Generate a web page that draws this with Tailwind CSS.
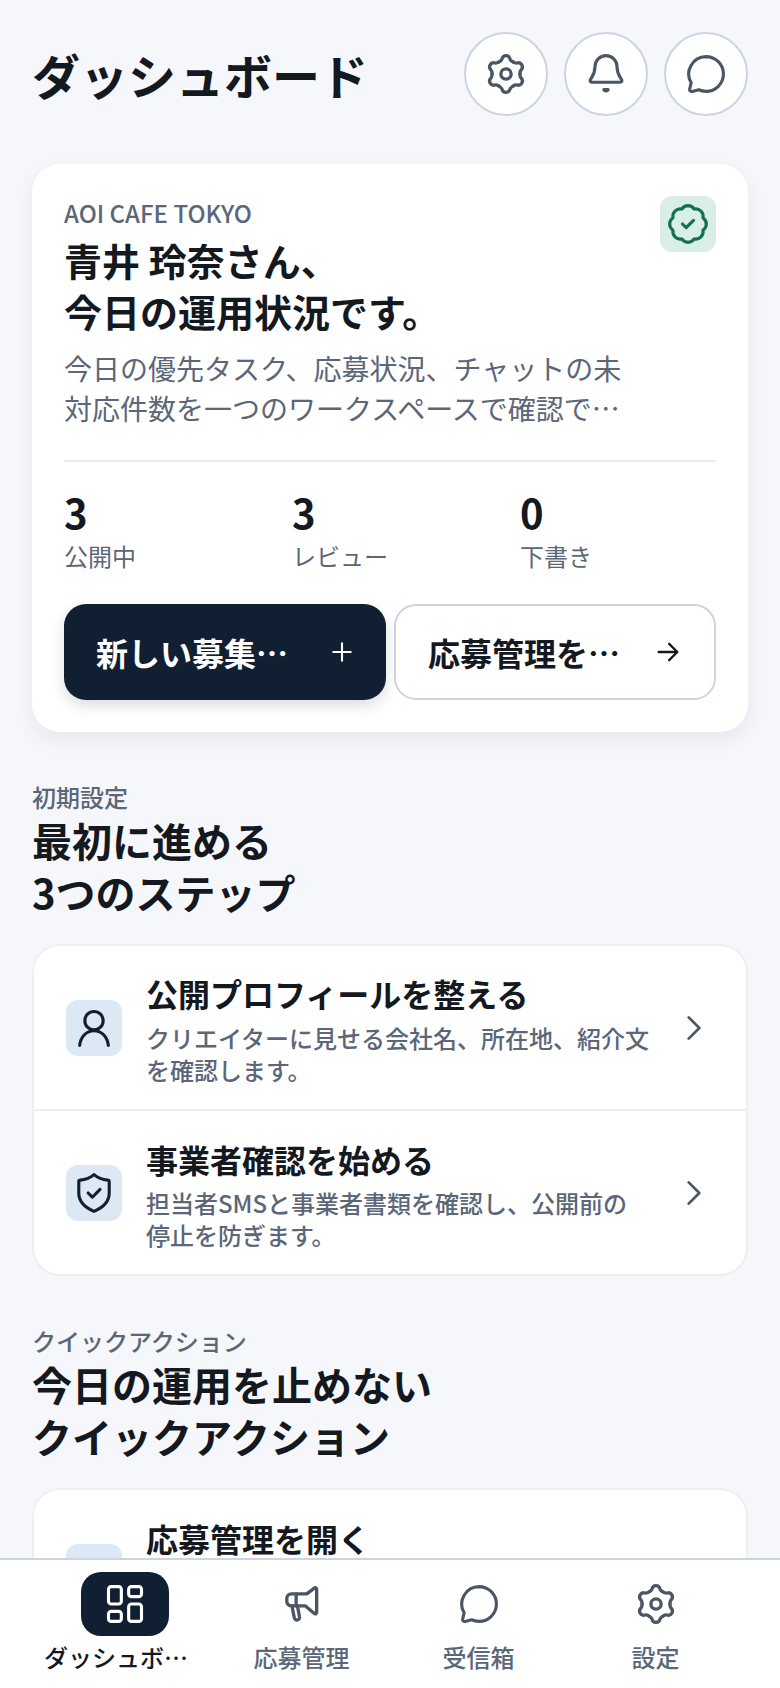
<!DOCTYPE html>
<html lang="ja">
<head>
  <meta charset="UTF-8" />
  <meta name="viewport" content="width=device-width, initial-scale=1" />
  <title>ダッシュボード</title>
  <script src="https://cdn.jsdelivr.net/npm/@tailwindcss/browser@4"></script>
</head>
<body class="relative h-[1688px] overflow-hidden bg-[#f5f7fb] font-['Noto_Sans_CJK_JP','Noto_Sans',sans-serif] text-[#14181f]">

  <main class="px-[32px] pt-[32px]">
    <!-- Header -->
    <header class="flex items-center justify-between h-[84px]">
      <h1 class="text-[48px] leading-[64px] font-bold">ダッシュボード</h1>
      <div class="flex gap-[16px]">
        <button class="w-[84px] h-[84px] rounded-full border-2 border-[#cbd5e1] bg-white flex items-center justify-center text-[#4b5563]">
          <svg class="w-[44px] h-[44px]" viewBox="0 0 24 24" fill="none" stroke="currentColor" stroke-width="1.8" stroke-linecap="round" stroke-linejoin="round">
            <path d="M8.2 5.42C9.1 4.9 9.6 4.5 9.8 3.8C10.1 2.6 11 2 12 2C13 2 13.9 2.6 14.2 3.8C14.4 4.5 14.9 4.9 15.8 5.42" />
            <path transform="rotate(60 12 12)" d="M8.2 5.42C9.1 4.9 9.6 4.5 9.8 3.8C10.1 2.6 11 2 12 2C13 2 13.9 2.6 14.2 3.8C14.4 4.5 14.9 4.9 15.8 5.42" />
            <path transform="rotate(120 12 12)" d="M8.2 5.42C9.1 4.9 9.6 4.5 9.8 3.8C10.1 2.6 11 2 12 2C13 2 13.9 2.6 14.2 3.8C14.4 4.5 14.9 4.9 15.8 5.42" />
            <path transform="rotate(180 12 12)" d="M8.2 5.42C9.1 4.9 9.6 4.5 9.8 3.8C10.1 2.6 11 2 12 2C13 2 13.9 2.6 14.2 3.8C14.4 4.5 14.9 4.9 15.8 5.42" />
            <path transform="rotate(240 12 12)" d="M8.2 5.42C9.1 4.9 9.6 4.5 9.8 3.8C10.1 2.6 11 2 12 2C13 2 13.9 2.6 14.2 3.8C14.4 4.5 14.9 4.9 15.8 5.42" />
            <path transform="rotate(300 12 12)" d="M8.2 5.42C9.1 4.9 9.6 4.5 9.8 3.8C10.1 2.6 11 2 12 2C13 2 13.9 2.6 14.2 3.8C14.4 4.5 14.9 4.9 15.8 5.42" />
            <circle cx="12" cy="12" r="2.800" />
          </svg>
        </button>
        <button class="w-[84px] h-[84px] rounded-full border-2 border-[#cbd5e1] bg-white flex items-center justify-center text-[#4b5563]">
          <svg class="w-[44px] h-[44px]" viewBox="0 0 24 24" fill="none" stroke="currentColor" stroke-width="1.7" stroke-linecap="round" stroke-linejoin="round">
            <path d="M12 2a6 6 0 0 0-6 6c0 4.200-2 6-2.600 7.200-.3.700.2 1.300 1 1.300h15.200c.8 0 1.300-.6 1-1.300C20 14 18 12.200 18 8a6 6 0 0 0-6-6z" />
            <path d="M10.800 20.500a1.300 1.300 0 0 0 2.400 0z" />
          </svg>
        </button>
        <button class="w-[84px] h-[84px] rounded-full border-2 border-[#cbd5e1] bg-white flex items-center justify-center text-[#4b5563]">
          <svg class="w-[44px] h-[44px]" viewBox="0 0 24 24" fill="none" stroke="currentColor" stroke-width="1.7" stroke-linecap="round" stroke-linejoin="round">
            <path d="M12 2.500a9.500 9.500 0 0 1 0 19c-1.700 0-3-.4-4-.9l-3.500.9c-1 .2-1.600-.4-1.400-1.300l.8-3.400A9.500 9.500 0 0 1 12 2.500z" />
          </svg>
        </button>
      </div>
    </header>

    <!-- Hero card -->
    <section class="mt-[48px] rounded-[28px] bg-white p-[32px] shadow-[0_8px_20px_rgba(15,23,42,0.07)]">
      <div class="flex justify-between gap-[16px]">
        <div class="min-w-0 flex-1">
          <p class="text-[24px] leading-[34px] font-medium text-[#5b6678]">AOI CAFE TOKYO</p>
          <h2 class="mt-[4px] text-[38px] leading-[51px] font-bold">青井 玲奈さん、<br />今日の運用状況です。</h2>
          <p class="mt-[12px] text-[28px] leading-[40px] text-[#5b6678] line-clamp-2">今日の優先タスク、応募状況、チャットの未対応件数を一つのワークスペースで確認できます。</p>
        </div>
        <div class="w-[56px] h-[56px] shrink-0 rounded-[12px] bg-[#d9efe5] flex items-center justify-center text-[#15704f]">
          <svg class="w-[44px] h-[44px]" viewBox="0 0 24 24" fill="none" stroke="currentColor" stroke-width="1.7" stroke-linecap="round" stroke-linejoin="round">
            <path d="M3.85 8.62a4 4 0 0 1 4.78-4.77 4 4 0 0 1 6.74 0 4 4 0 0 1 4.78 4.78 4 4 0 0 1 0 6.74 4 4 0 0 1-4.77 4.78 4 4 0 0 1-6.75 0 4 4 0 0 1-4.78-4.77 4 4 0 0 1 0-6.76Z" />
            <path d="m9 12 2 2 4-4" />
          </svg>
        </div>
      </div>

      <div class="mt-[32px] border-t-2 border-[#e8ebf0] pt-[22px] grid grid-cols-3 gap-[32px]">
        <div>
          <p class="text-[40px] leading-[56px] font-bold">3</p>
          <p class="text-[24px] leading-[32px] text-[#5b6678]">公開中</p>
        </div>
        <div>
          <p class="text-[40px] leading-[56px] font-bold">3</p>
          <p class="text-[24px] leading-[32px] text-[#5b6678]">レビュー</p>
        </div>
        <div>
          <p class="text-[40px] leading-[56px] font-bold">0</p>
          <p class="text-[24px] leading-[32px] text-[#5b6678]">下書き</p>
        </div>
      </div>

      <div class="mt-[32px] grid grid-cols-2 gap-[8px]">
        <button class="h-[96px] rounded-[22px] bg-[#111f33] text-white pl-[32px] pr-[30px] flex items-center gap-[36px] shadow-[0_6px_14px_rgba(15,23,42,0.14)]">
          <span class="min-w-0 flex-1 truncate text-left text-[32px] leading-[44px] font-bold">新しい募集を作成する</span>
          <svg class="w-[28px] h-[28px] shrink-0" viewBox="0 0 24 24" fill="none" stroke="currentColor" stroke-width="1.800" stroke-linecap="round">
            <path d="M12 4.500v15M4.500 12h15" />
          </svg>
        </button>
        <button class="h-[96px] rounded-[22px] border-2 border-[#cbd5e1] bg-white px-[32px] flex items-center gap-[32px]">
          <span class="min-w-0 flex-1 truncate text-left text-[32px] leading-[44px] font-bold">応募管理を開いて確認</span>
          <svg class="w-[28px] h-[28px] shrink-0" viewBox="0 0 24 24" fill="none" stroke="currentColor" stroke-width="2" stroke-linecap="round" stroke-linejoin="round">
            <path d="M4 12h16M13 5l7 7-7 7" />
          </svg>
        </button>
      </div>
    </section>

    <!-- Setup steps -->
    <section class="mt-[48px]">
      <p class="text-[24px] leading-[34px] font-medium text-[#5b6678]">初期設定</p>
      <h2 class="text-[40px] leading-[52px] font-bold">最初に進める<br />3つのステップ</h2>
      <div class="mt-[26px] rounded-[28px] border-2 border-[#eceff3] bg-white">
        <a class="flex items-center gap-[24px] pl-[32px] pr-[36px] pt-[23px] pb-[23px] border-b-2 border-[#eceff3]">
          <span class="w-[56px] h-[56px] shrink-0 rounded-[12px] bg-[#dce8f4] flex items-center justify-center text-[#111f33]">
            <svg class="w-[44px] h-[44px]" viewBox="0 0 24 24" fill="none" stroke="currentColor" stroke-width="1.7" stroke-linecap="round" stroke-linejoin="round">
              <circle cx="12" cy="8" r="5" />
              <path d="M4.200 21.500c.4-4.500 3.500-8 7.800-8s7.400 3.500 7.800 8" />
            </svg>
          </span>
          <span class="min-w-0 flex-1">
            <span class="block text-[32px] leading-[48px] font-bold">公開プロフィールを整える</span>
            <span class="block mt-[5px] text-[24px] leading-[32px] font-medium text-[#5b6678]">クリエイターに見せる会社名、所在地、紹介文を確認します。</span>
          </span>
          <svg class="ml-[3px] w-[32px] h-[32px] shrink-0 text-[#4b5563]" viewBox="0 0 24 24" fill="none" stroke="currentColor" stroke-width="2" stroke-linecap="round" stroke-linejoin="round">
            <path d="m8 4 8 8-8 8" />
          </svg>
        </a>
        <a class="flex items-center gap-[24px] pl-[32px] pr-[36px] pt-[24px] pb-[23px]">
          <span class="w-[56px] h-[56px] shrink-0 rounded-[12px] bg-[#dce8f4] flex items-center justify-center text-[#111f33]">
            <svg class="w-[44px] h-[44px]" viewBox="0 0 24 24" fill="none" stroke="currentColor" stroke-width="1.7" stroke-linecap="round" stroke-linejoin="round">
              <path d="M12 2c2 1.700 4.500 2.700 7.500 3 .5 0 .8.400.8.900v6.100c0 4.500-3.500 8-8.300 10-4.800-2-8.300-5.500-8.300-10V5.900c0-.5.300-.9.800-.9 3-.3 5.500-1.300 7.500-3z" />
              <path d="m8.800 12 2.300 2.300 4.200-4.300" />
            </svg>
          </span>
          <span class="min-w-0 flex-1">
            <span class="block text-[32px] leading-[48px] font-bold">事業者確認を始める</span>
            <span class="block mt-[4px] text-[24px] leading-[32px] font-medium text-[#5b6678]">担当者SMSと事業者書類を確認し、公開前の停止を防ぎます。</span>
          </span>
          <svg class="ml-[3px] w-[32px] h-[32px] shrink-0 text-[#4b5563]" viewBox="0 0 24 24" fill="none" stroke="currentColor" stroke-width="2" stroke-linecap="round" stroke-linejoin="round">
            <path d="m8 4 8 8-8 8" />
          </svg>
        </a>
      </div>
    </section>

    <!-- Quick actions -->
    <section class="mt-[48px]">
      <p class="text-[24px] leading-[34px] font-medium text-[#5b6678]">クイックアクション</p>
      <h2 class="text-[40px] leading-[52px] font-bold">今日の運用を止めない<br />クイックアクション</h2>
      <div class="mt-[26px] rounded-[28px] border-2 border-[#eceff3] bg-white">
        <a class="flex items-center gap-[24px] pl-[32px] pr-[36px] pt-[24px] pb-[23px]">
          <span class="w-[56px] h-[56px] shrink-0 rounded-[12px] bg-[#dce8f4]"></span>
          <span class="min-w-0 flex-1">
            <span class="block text-[32px] leading-[48px] font-bold">応募管理を開く</span>
            <span class="block mt-[4px] text-[24px] leading-[32px] font-medium text-[#5b6678]">募集ごとの応募者を確認し、選考と次の対応をまとめて進めます。</span>
          </span>
          <svg class="ml-[3px] w-[32px] h-[32px] shrink-0 text-[#4b5563]" viewBox="0 0 24 24" fill="none" stroke="currentColor" stroke-width="2" stroke-linecap="round" stroke-linejoin="round">
            <path d="m8 4 8 8-8 8" />
          </svg>
        </a>
      </div>
    </section>
  </main>

  <!-- Bottom nav -->
  <nav class="absolute bottom-0 left-0 right-0 h-[130px] bg-white border-t-2 border-[#cbd5e1] px-[36px] grid grid-cols-4">
    <a class="min-w-0 px-[8px] flex flex-col items-center pt-[12px]">
      <span class="w-[88px] h-[64px] rounded-[20px] bg-[#111f33] flex items-center justify-center text-white">
        <svg class="w-[44px] h-[44px]" viewBox="0 0 24 24" fill="none" stroke="currentColor" stroke-width="1.7" stroke-linejoin="round">
          <rect x="3" y="2.500" width="7" height="9.500" rx="1.500" />
          <rect x="14" y="2.500" width="7" height="5.500" rx="1.500" />
          <rect x="3" y="16" width="7" height="5.500" rx="1.500" />
          <rect x="14" y="12" width="7" height="9.500" rx="1.500" />
        </svg>
      </span>
      <span class="mt-[4px] w-full truncate text-[24px] leading-[34px] font-medium text-[#14181f]">ダッシュボード</span>
    </a>
    <a class="min-w-0 px-[6px] flex flex-col items-center pt-[12px]">
      <span class="w-[88px] h-[64px] flex items-center justify-center text-[#4b5563]">
        <svg class="w-[44px] h-[44px]" viewBox="0 0 24 24" fill="none" stroke="currentColor" stroke-width="1.8" stroke-linecap="round" stroke-linejoin="round">
          <path d="M20 4c0-.6-.5-1-1.100-.8L14.600 6.500H6.200A2.500 2.500 0 0 0 3.700 9v1.500A2.500 2.500 0 0 0 6.200 13H13.700l5.200 4.300c.6.300 1.100-.1 1.100-.8z" />
          <path d="M8.800 6.500V13" />
          <path d="m6.500 13 1.300 6.500c.2.900 1 1.400 1.800 1.200s1.300-1 1-1.900L9.500 13" />
        </svg>
      </span>
      <span class="mt-[4px] truncate text-[24px] leading-[34px] font-medium text-[#5b6678]">応募管理</span>
    </a>
    <a class="min-w-0 px-[6px] flex flex-col items-center pt-[12px]">
      <span class="w-[88px] h-[64px] flex items-center justify-center text-[#4b5563]">
        <svg class="w-[44px] h-[44px]" viewBox="0 0 24 24" fill="none" stroke="currentColor" stroke-width="1.7" stroke-linecap="round" stroke-linejoin="round">
          <path d="M12 2.500a9.500 9.500 0 0 1 0 19c-1.700 0-3-.4-4-.9l-3.500.9c-1 .2-1.600-.4-1.400-1.300l.8-3.400A9.500 9.500 0 0 1 12 2.500z" />
        </svg>
      </span>
      <span class="mt-[4px] truncate text-[24px] leading-[34px] font-medium text-[#5b6678]">受信箱</span>
    </a>
    <a class="min-w-0 px-[6px] flex flex-col items-center pt-[12px]">
      <span class="w-[88px] h-[64px] flex items-center justify-center text-[#4b5563]">
        <svg class="w-[44px] h-[44px]" viewBox="0 0 24 24" fill="none" stroke="currentColor" stroke-width="1.8" stroke-linecap="round" stroke-linejoin="round">
          <path d="M8.2 5.42C9.1 4.9 9.6 4.5 9.8 3.8C10.1 2.6 11 2 12 2C13 2 13.9 2.6 14.2 3.8C14.4 4.5 14.9 4.9 15.8 5.42" />
          <path transform="rotate(60 12 12)" d="M8.2 5.42C9.1 4.9 9.6 4.5 9.8 3.8C10.1 2.6 11 2 12 2C13 2 13.9 2.6 14.2 3.8C14.4 4.5 14.9 4.9 15.8 5.42" />
          <path transform="rotate(120 12 12)" d="M8.2 5.42C9.1 4.9 9.6 4.5 9.8 3.8C10.1 2.6 11 2 12 2C13 2 13.9 2.6 14.2 3.8C14.4 4.5 14.9 4.9 15.8 5.42" />
          <path transform="rotate(180 12 12)" d="M8.2 5.42C9.1 4.9 9.6 4.5 9.8 3.8C10.1 2.6 11 2 12 2C13 2 13.9 2.6 14.2 3.8C14.4 4.5 14.9 4.9 15.8 5.42" />
          <path transform="rotate(240 12 12)" d="M8.2 5.42C9.1 4.9 9.6 4.5 9.8 3.8C10.1 2.6 11 2 12 2C13 2 13.9 2.6 14.2 3.8C14.4 4.5 14.9 4.9 15.8 5.42" />
          <path transform="rotate(300 12 12)" d="M8.2 5.42C9.1 4.9 9.6 4.5 9.8 3.8C10.1 2.6 11 2 12 2C13 2 13.9 2.6 14.2 3.8C14.4 4.5 14.9 4.9 15.8 5.42" />
          <circle cx="12" cy="12" r="2.800" />
        </svg>
      </span>
      <span class="mt-[4px] truncate text-[24px] leading-[34px] font-medium text-[#5b6678]">設定</span>
    </a>
  </nav>
</body>
</html>
